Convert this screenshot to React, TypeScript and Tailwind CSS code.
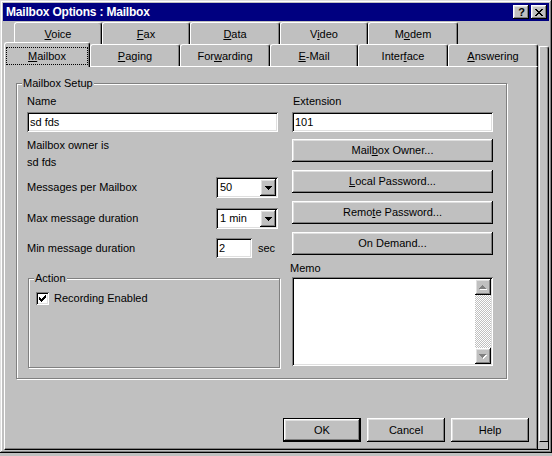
import React from "react";

// win95 bevels
const raised =
  "shadow-[inset_-1px_-1px_0_#000,inset_1px_1px_0_#fff,inset_-2px_-2px_0_#808080,inset_2px_2px_0_#dfdfdf]";
const sunken =
  "shadow-[inset_1px_1px_0_#808080,inset_-1px_-1px_0_#fff,inset_2px_2px_0_#000,inset_-2px_-2px_0_#dfdfdf]";

function Tab({ className = "", children }: { className?: string; children: React.ReactNode }) {
  return (
    <div
      className={`flex h-[22px] items-center justify-center rounded-t-[3px] border-t border-r border-l border-t-white border-r-black border-l-white bg-[#c0c0c0] pt-[2px] shadow-[inset_-1px_0_0_#808080] ${className}`}
    >
      {children}
    </div>
  );
}

function Button({ className = "", children }: { className?: string; children: React.ReactNode }) {
  return (
    <div className={`flex items-center justify-center bg-[#c0c0c0] ${raised} ${className}`}>
      {children}
    </div>
  );
}

function DownArrow({ color = "#000" }: { color?: string }) {
  return (
    <svg width="7" height="4" viewBox="0 0 7 4" shapeRendering="crispEdges">
      <path d="M0 0h7v1h-7z M1 1h5v1h-5z M2 2h3v1h-3z M3 3h1v1h-1z" fill={color} />
    </svg>
  );
}

function DisabledArrow({ up }: { up?: boolean }) {
  const d = up
    ? "M3 0h1v1h-1z M2 1h3v1h-3z M1 2h5v1h-5z M0 3h7v1h-7z"
    : "M0 0h7v1h-7z M1 1h5v1h-5z M2 2h3v1h-3z M3 3h1v1h-1z";
  return (
    <svg width="8" height="5" viewBox="0 0 8 5" shapeRendering="crispEdges">
      <path d={d} fill="#fff" transform="translate(1 1)" />
      <path d={d} fill="#808080" />
    </svg>
  );
}

function Combo({ value }: { value: string }) {
  return (
    <div className={`flex h-[21px] w-[62px] bg-white p-[2px] ${sunken}`}>
      <span className="flex flex-1 items-center pl-[2px]">{value}</span>
      <div className={`flex w-[16px] items-center justify-center bg-[#c0c0c0] ${raised}`}>
        <DownArrow />
      </div>
    </div>
  );
}

function Field({ value, className = "" }: { value: string; className?: string }) {
  return (
    <div className={`flex h-[20px] items-center bg-white pl-[3px] ${sunken} ${className}`}>{value}</div>
  );
}

export default function App() {
  return (
    <div className="h-[456px] w-[552px] bg-[#c0c0c0] font-['Liberation_Sans',Arial,sans-serif] text-[11px] leading-[13px] text-black">
      <div className="h-[453px] w-[552px] bg-[#c0c0c0] p-[3px] shadow-[inset_-1px_-1px_0_#000,inset_1px_1px_0_#dfdfdf,inset_-2px_-2px_0_#808080,inset_2px_2px_0_#fff]">
        {/* title bar */}
        <div className="flex h-[18px] items-center bg-[#000080] pr-[2px] pl-[3px]">
          <span className="flex-1 text-[12px] font-bold tracking-[-0.2px] text-white">
            Mailbox Options : Mailbox
          </span>
          <Button className="h-[14px] w-[16px] pl-[1px] text-[11px] leading-none font-bold">?</Button>
          <Button className="ml-[2px] h-[14px] w-[16px]">
            <svg width="8" height="7" viewBox="0 0 8 7" shapeRendering="crispEdges">
              <path
                d="M0 0h2v1h-2z M6 0h2v1h-2z M1 1h2v1h-2z M5 1h2v1h-2z M2 2h4v1h-4z M3 3h2v1h-2z M2 4h4v1h-4z M1 5h2v1h-2z M5 5h2v1h-2z M0 6h2v1h-2z M6 6h2v1h-2z"
                fill="#000"
              />
            </svg>
          </Button>
        </div>

        <div className="mt-[1px] flex pl-[1px]">
          <div className="flex w-[534px] flex-col">
            {/* back row */}
            <div className="flex pl-[10px]">
              <Tab className="w-[88px]">
                <span><u>V</u>oice</span>
              </Tab>
              <Tab className="w-[88px]">
                <span><u>F</u>ax</span>
              </Tab>
              <Tab className="w-[90px]">
                <span><u>D</u>ata</span>
              </Tab>
              <Tab className="w-[88px]">
                <span>V<u>i</u>deo</span>
              </Tab>
              <Tab className="w-[90px]">
                <span>M<u>o</u>dem</span>
              </Tab>
            </div>

            {/* front row */}
            <div className="flex h-[22px] items-end">
              <div className="relative z-10 -mb-[1px] flex h-[25px] w-[86px] rounded-t-[3px] border-t border-r border-l border-t-white border-r-black border-l-white bg-[#c0c0c0] pt-[4px] pr-[1px] pb-[2px] pl-[1px] shadow-[inset_-1px_0_0_#808080]">
                <div className="flex flex-1 items-center justify-center border border-dotted border-black">
                  <span><u>M</u>ailbox</span>
                </div>
              </div>
              <Tab className="w-[90px]">
                <span><u>P</u>aging</span>
              </Tab>
              <Tab className="w-[90px]">
                <span>For<u>w</u>arding</span>
              </Tab>
              <Tab className="w-[88px]">
                <span><u>E</u>-Mail</span>
              </Tab>
              <Tab className="w-[90px]">
                <span>Inter<u>f</u>ace</span>
              </Tab>
              <Tab className="w-[90px]">
                <span><u>A</u>nswering</span>
              </Tab>
            </div>

            {/* page */}
            <div className="flex h-[384px] flex-col border border-t-white border-r-black border-b-black border-l-white pt-[16px] pl-[11px] shadow-[inset_-1px_-1px_0_#808080]">
              <div className="relative h-[296px] w-[491px] border border-[#808080] pt-[11px] pl-[10px] shadow-[1px_1px_0_#fff,inset_1px_1px_0_#fff]">
                <span className="absolute -top-[7px] left-[5px] bg-[#c0c0c0] px-[1px]">Mailbox Setup</span>

                <div className="flex gap-[12px]">
                  {/* left column */}
                  <div className="flex w-[253px] flex-col">
                    <span>Name</span>
                    <Field value="sd fds" className="mt-[4px] w-[251px]" />
                    <span className="mt-[7px]">Mailbox owner is</span>
                    <span className="mt-[4px]">sd fds</span>

                    <div className="mt-[8px] flex items-center">
                      <span className="w-[189px]">Messages per Mailbox</span>
                      <Combo value="50" />
                    </div>
                    <div className="mt-[10px] flex items-center">
                      <span className="w-[189px]">Max message duration</span>
                      <Combo value="1 min" />
                    </div>
                    <div className="mt-[9px] flex items-center">
                      <span className="w-[189px]">Min message duration</span>
                      <Field value="2" className="w-[36px] pl-[3px]" />
                      <span className="ml-[6px]">sec</span>
                    </div>

                    <div className="relative mt-[20px] ml-[1px] h-[90px] w-[252px] border border-[#808080] pt-[13px] pl-[7px] shadow-[1px_1px_0_#fff,inset_1px_1px_0_#fff]">
                      <span className="absolute -top-[7px] left-[5px] bg-[#c0c0c0] px-[1px]">Action</span>
                      <div className="flex items-center">
                        <div className={`flex h-[13px] w-[13px] items-center justify-center bg-white ${sunken}`}>
                          <svg width="7" height="7" viewBox="0 0 7 7" shapeRendering="crispEdges">
                            <path
                              d="M0 2h1v3h-1z M1 3h1v3h-1z M2 4h1v3h-1z M3 3h1v3h-1z M4 2h1v3h-1z M5 1h1v3h-1z M6 0h1v3h-1z"
                              fill="#000"
                            />
                          </svg>
                        </div>
                        <span className="ml-[5px]">Recording Enabled</span>
                      </div>
                    </div>
                  </div>

                  {/* right column */}
                  <div className="flex w-[201px] flex-col">
                    <span className="pl-[1px]">Extension</span>
                    <Field value="101" className="mt-[4px]" />
                    <Button className="mt-[7px] h-[23px]">
                      <span>Mail<u>b</u>ox Owner...</span>
                    </Button>
                    <Button className="mt-[8px] h-[23px]">
                      <span><u>L</u>ocal Password...</span>
                    </Button>
                    <Button className="mt-[8px] h-[23px]">
                      <span>Remo<u>t</u>e Password...</span>
                    </Button>
                    <Button className="mt-[8px] h-[23px]">
                      <span>On Demand...</span>
                    </Button>
                    <span className="mt-[7px] -ml-[2px]">Memo</span>
                    <div className={`mt-[2px] flex h-[89px] justify-end bg-white p-[2px] ${sunken}`}>
                      <div className="flex w-[16px] flex-col">
                        <Button className="h-[16px]">
                          <DisabledArrow up />
                        </Button>
                        <div className="flex-1 bg-[repeating-conic-gradient(#c0c0c0_0_25%,#fff_0_50%)] bg-[length:2px_2px]" />
                        <Button className="h-[16px]">
                          <DisabledArrow />
                        </Button>
                      </div>
                    </div>
                  </div>
                </div>
              </div>

              {/* dialog buttons */}
              <div className="mt-[39px] flex justify-end gap-[6px] pr-[8px]">
                <div className="h-[24px] w-[78px] border border-black">
                  <Button className="h-full w-full">OK</Button>
                </div>
                <Button className="h-[24px] w-[78px]">Cancel</Button>
                <Button className="h-[24px] w-[78px]">Help</Button>
              </div>
            </div>
          </div>

          {/* edge of the rows behind */}
          <div className="mt-[24px] flex w-[11px] flex-col">
            <div className="ml-[1px] h-[396px] rounded-tr-[3px] border-t border-r border-b border-l border-t-white border-r-black border-b-black border-l-white shadow-[inset_-1px_0_0_#808080]" />
            <div className="h-[8px] border-r border-b border-r-black border-b-black" />
          </div>
        </div>
      </div>
    </div>
  );
}
